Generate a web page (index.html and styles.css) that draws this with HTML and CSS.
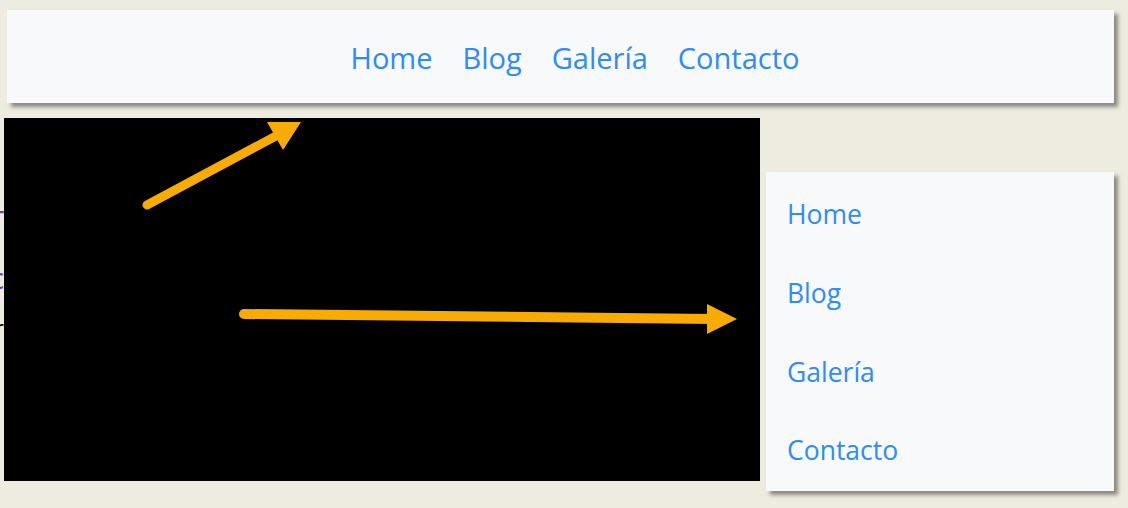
FILE: index.html
```html
<!DOCTYPE html>
<html lang="es">
<head>
<meta charset="utf-8">
<title>Menú</title>
<link rel="stylesheet" href="styles.css">
</head>
<body>
<nav class="topnav">
  <a href="#">Home</a>
  <a href="#">Blog</a>
  <a href="#">Galería</a>
  <a href="#">Contacto</a>
</nav>
<main class="stage">
  <div class="peek">
    <p class="peek-line peek-t">T</p>
    <p class="peek-line peek-c">c</p>
    <p class="peek-line peek-r">r</p>
  </div>
  <div class="blackout"></div>
  <ul class="dropdown">
    <li><a href="#">Home</a></li>
    <li><a href="#">Blog</a></li>
    <li><a href="#">Galería</a></li>
    <li><a href="#">Contacto</a></li>
  </ul>
</main>
<svg class="arrows" width="1128" height="508" viewBox="0 0 1128 508">
  <line x1="147" y1="205" x2="276" y2="136" stroke="#f8ab02" stroke-width="9" stroke-linecap="round"/>
  <polygon points="267,122 301,122 283,150" fill="#f8ab02"/>
  <line x1="244" y1="314" x2="712" y2="319" stroke="#f8ab02" stroke-width="10" stroke-linecap="round"/>
  <polygon points="707,304 737,319 707,334" fill="#f8ab02"/>
</svg>
</body>
</html>
```
FILE: styles.css
```css
html, body {
  margin: 0;
  padding: 0;
}
body {
  background: #eeece1;
  width: 1128px;
  height: 508px;
  overflow: hidden;
  position: relative;
  font-family: "Open Sans", "Noto Sans", sans-serif;
}
.topnav {
  margin: 10px 0 0 7px;
  width: 1107px;
  height: 93px;
  box-sizing: border-box;
  padding-left: 29px;
  padding-top: 2px;
  background: #f7f9fb;
  box-shadow: 4px 4px 4px rgba(60, 55, 40, 0.55);
  display: flex;
  justify-content: center;
  align-items: center;
  gap: 30px;
}
.topnav a, .dropdown a {
  color: #2f8bfb;
  text-decoration: none;
  line-height: 40px;
}
.topnav a {
  font-size: 29px;
}
.dropdown a {
  font-size: 26.5px;
}
.stage {
  position: relative;
  height: 405px;
}
.peek {
  padding-top: 90px;
}
.peek-line {
  margin: 0;
  width: 4px;
  direction: rtl;
  white-space: nowrap;
  font-size: 30px;
}
.peek-t {
  color: #6e3fa3;
  height: 56px;
  line-height: 56px;
}
.peek-c {
  color: #6e3fa3;
  height: 58px;
  line-height: 58px;
}
.peek-r {
  color: #111;
  font-size: 22px;
  height: 40px;
  line-height: 40px;
}
.blackout {
  position: absolute;
  left: 4px;
  top: 15px;
  width: 756px;
  height: 363px;
  background: #000;
}
.dropdown {
  position: absolute;
  left: 766px;
  top: 69px;
  width: 348px;
  height: 319px;
  margin: 0;
  padding: 0;
  list-style: none;
  box-sizing: border-box;
  background: #f7f9fb;
  box-shadow: 4px 4px 4px rgba(60, 55, 40, 0.55);
}
.dropdown li {
  height: 78.75px;
  padding: 22px 0 0 21px;
  box-sizing: border-box;
}
.arrows {
  position: absolute;
  left: 0;
  top: 0;
  pointer-events: none;
}
```
